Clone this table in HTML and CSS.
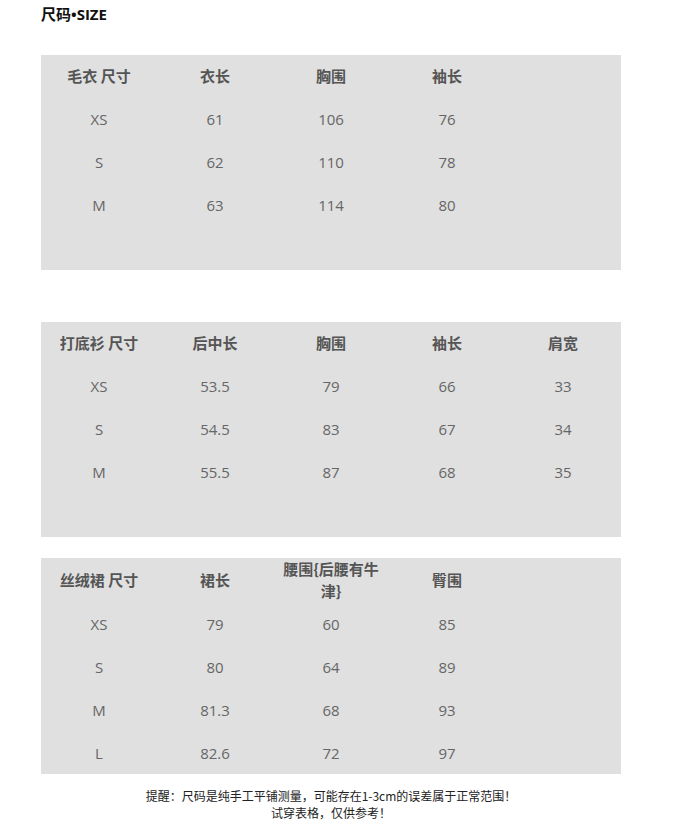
FILE: index.html
```html
<!DOCTYPE html>
<html lang="zh">
<head>
<meta charset="utf-8">
<link rel="stylesheet" href="styles.css">
</head>
<body>
<div class="page">
  <h1 class="title">尺码•SIZE</h1>

  <table class="size-table t1">
    <tr class="head"><th>毛衣 尺寸</th><th>衣长</th><th>胸围</th><th>袖长</th><th></th></tr>
    <tr><td>XS</td><td>61</td><td>106</td><td>76</td><td></td></tr>
    <tr><td>S</td><td>62</td><td>110</td><td>78</td><td></td></tr>
    <tr><td>M</td><td>63</td><td>114</td><td>80</td><td></td></tr>
    <tr><td></td><td></td><td></td><td></td><td></td></tr>
  </table>

  <table class="size-table t2">
    <tr class="head"><th>打底衫 尺寸</th><th>后中长</th><th>胸围</th><th>袖长</th><th>肩宽</th></tr>
    <tr><td>XS</td><td>53.5</td><td>79</td><td>66</td><td>33</td></tr>
    <tr><td>S</td><td>54.5</td><td>83</td><td>67</td><td>34</td></tr>
    <tr><td>M</td><td>55.5</td><td>87</td><td>68</td><td>35</td></tr>
    <tr><td></td><td></td><td></td><td></td><td></td></tr>
  </table>

  <table class="size-table t3">
    <tr class="head"><th>丝绒裙 尺寸</th><th>裙长</th><th>腰围{后腰有牛津}</th><th>臀围</th><th></th></tr>
    <tr><td>XS</td><td>79</td><td>60</td><td>85</td><td></td></tr>
    <tr><td>S</td><td>80</td><td>64</td><td>89</td><td></td></tr>
    <tr><td>M</td><td>81.3</td><td>68</td><td>93</td><td></td></tr>
    <tr><td>L</td><td>82.6</td><td>72</td><td>97</td><td></td></tr>
  </table>

  <p class="note">提醒：尺码是纯手工平铺测量，可能存在1-3cm的误差属于正常范围！<br>试穿表格，仅供参考！</p>
</div>
</body>
</html>
```

FILE: styles.css
```css
html, body {
  margin: 0;
  padding: 0;
  background: #ffffff;
}

.page {
  padding: 4px 0 0 41px;
  font-family: "Open Sans", "Noto Sans CJK SC", sans-serif;
}

.title {
  margin: 0;
  font-size: 15px;
  line-height: 20px;
  font-weight: bold;
  color: #111;
  font-family: "Open Sans", "Noto Sans CJK SC", sans-serif;
}

.size-table {
  width: 580px;
  table-layout: fixed;
  border-collapse: collapse;
  background: #e0e0e0;
}

.size-table th,
.size-table td {
  width: 116px;
  height: 43px;
  padding: 0 5px 2px;
  box-sizing: border-box;
  text-align: center;
  vertical-align: middle;
  font-size: 15px;
  line-height: 22px;
}

.size-table th {
  font-family: "Noto Sans CJK SC", sans-serif;
  font-weight: bold;
  color: #555;
}

.size-table td {
  color: #666;
}

.t1 { margin-top: 31px; }
.t2 { margin-top: 52px; }
.t3 { margin-top: 21px; }
.t3 .head th { height: 44px; padding-bottom: 0; }
.t3 td { padding-bottom: 0; }

.note {
  width: 580px;
  margin: 13px 0 0;
  text-align: center;
  font-family: "Noto Sans CJK SC", sans-serif;
  font-size: 12px;
  line-height: 17px;
  color: #222;
}
```
